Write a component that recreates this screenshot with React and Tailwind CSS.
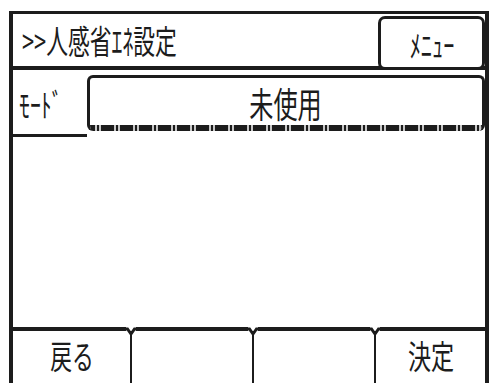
import React from "react";

const font = { fontFamily: '"Noto Sans CJK JP", "DejaVu Sans", sans-serif' };

function Label({ children, className = "" }) {
  // panel font is tall and narrow, squeeze it horizontally
  return (
    <span className={"inline-block whitespace-nowrap leading-none text-[#1c1c1c] " + className}>
      {children}
    </span>
  );
}

function Notch() {
  return (
    <svg className="absolute -top-[4px] -left-[8px]" width="14" height="10" viewBox="0 0 14 10">
      <rect x="2" y="0" width="10" height="4" fill="#fff" />
      <path d="M0 2 L3.5 2 L7 7 L10.5 2 L14 2" fill="none" stroke="#1c1c1c" strokeWidth="3" />
    </svg>
  );
}

export default function App() {
  return (
    <div className="w-[489px] h-[383px] overflow-hidden bg-white" style={font}>
      <div className="ml-[9px] mt-[11px] h-[400px] border-l-[4px] border-r-[4px] border-t-[3px] border-[#1c1c1c] flex flex-col">
        {/* header */}
        <div className="h-[56px] flex items-stretch border-b-[4px] border-[#1c1c1c]">
          <div className="flex-1 flex items-center pl-[9px]">
            <Label className="text-[33px] origin-left scale-x-[0.66]">&gt;&gt;人感省ｴﾈ設定</Label>
          </div>
          <div className="mt-[2px] -mb-[4px] w-[107px] rounded-[7px] border-[3px] border-[#1c1c1c] bg-white flex items-center justify-center">
            <Label className="text-[31px] scale-x-[0.72]">ﾒﾆｭｰ</Label>
          </div>
        </div>

        {/* mode row */}
        <div className="flex h-[67px]">
          <div className="w-[74px] border-b-[3px] border-[#1c1c1c] flex items-center pl-[6px] pt-[2px]">
            <Label className="text-[32px] origin-left scale-x-[0.68]">ﾓｰﾄﾞ</Label>
          </div>
          <div className="flex-1 pt-[5px] pb-[6px]">
            <div className="h-full rounded-[6px] border-[3px] border-b-0 border-[#1c1c1c] flex flex-col overflow-hidden">
              <div className="flex-1 flex items-center justify-center pt-[2px]">
                <Label className="text-[35px] scale-x-[0.69]">未使用</Label>
              </div>
              <div className="h-[6px] bg-[repeating-linear-gradient(90deg,#1c1c1c_0_5px,#c8c8c8_5px_7px,#1c1c1c_7px_9px,#c8c8c8_9px_11px,#1c1c1c_11px_19px)]" />
            </div>
          </div>
        </div>

        {/* empty body */}
        <div className="h-[190px]" />

        {/* bottom buttons */}
        <div className="flex border-t-[4px] border-[#1c1c1c] h-[60px]">
          <div className="w-[117px] flex justify-center pt-[8px]">
            <Label className="text-[33px] scale-x-[0.66]">戻る</Label>
          </div>
          <div className="relative w-[122px] border-l-[2px] border-[#1c1c1c]">
            <Notch />
          </div>
          <div className="relative w-[122px] border-l-[2px] border-[#1c1c1c]">
            <Notch />
          </div>
          <div className="relative flex-1 border-l-[2px] border-[#1c1c1c] flex justify-center pt-[8px]">
            <Notch />
            <Label className="text-[33px] scale-x-[0.7]">決定</Label>
          </div>
        </div>
      </div>
    </div>
  );
}
